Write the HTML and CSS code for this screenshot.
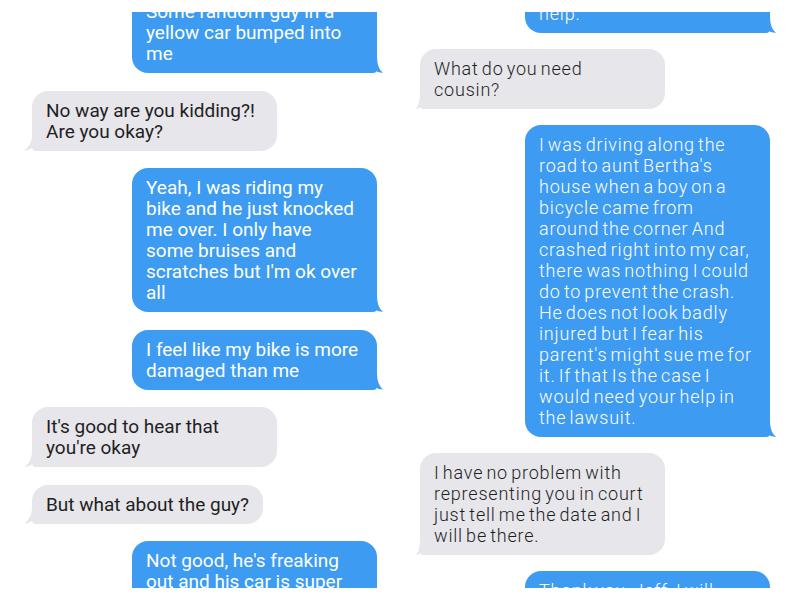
FILE: index.html
```html
<!DOCTYPE html>
<html lang="en">
<head>
    <meta charset="UTF-8">
    <meta name="viewport" content="width=device-width, initial-scale=1.0">
    <title>Conversation</title>
    <link rel="stylesheet" href="styles.css">
</head>
<body>
    <div class="screens">
        <div class="thread thread-left">
            <div class="bubble out full first">Some random guy in a<br>yellow car bumped into<br>me</div>
            <div class="bubble in full">No way are you kidding?!<br>Are you okay?</div>
            <div class="bubble out full">Yeah, I was riding my<br>bike and he just knocked<br>me over. I only have<br>some bruises and<br>scratches but I'm ok over<br>all</div>
            <div class="bubble out full">I feel like my bike is more<br>damaged than me</div>
            <div class="bubble in full">It's good to hear that<br>you're okay</div>
            <div class="bubble in">But what about the guy?</div>
            <div class="bubble out full">Not good, he's freaking<br>out and his car is super<br>damaged</div>
        </div>

        <div class="thread thread-right">
            <div class="bubble out full first">I need your legal<br>help.</div>
            <div class="bubble in full">What do you need<br>cousin?</div>
            <div class="bubble out full">I was driving along the<br>road to aunt Bertha's<br>house when a boy on a<br>bicycle came from<br>around the corner And<br>crashed right into my car,<br>there was nothing I could<br>do to prevent the crash.<br>He does not look badly<br>injured but I fear his<br>parent's might sue me for<br>it. If that Is the case I<br>would need your help in<br>the lawsuit.</div>
            <div class="bubble in full">I have no problem with<br>representing you in court<br>just tell me the date and I<br>will be there.</div>
            <div class="bubble out full">Thank you, Jeff. I will<br>let you know</div>
        </div>
    </div>
</body>
</html>
```

FILE: styles.css
```css
* {
    margin: 0;
    padding: 0;
    box-sizing: border-box;
}

body {
    background: #fff;
    font-family: Roboto, "Liberation Sans", Arial, sans-serif;
}

.screens {
    display: grid;
    grid-template-columns: 400px 400px;
    padding-top: 12px;
}

.thread {
    height: 576px;
    overflow: hidden;
    display: flex;
    flex-direction: column;
    gap: 17.5px;
}

.thread-left {
    padding: 0 23px 0 32px;
}

.thread-left .first {
    margin-top: -20px;
}

.thread-right {
    padding: 0 30px 0 20px;
    gap: 16px;
    font-weight: 300;
    letter-spacing: 0.8px;
    word-spacing: -2px;
}

.thread-right .first {
    margin-top: -39px;
}

.bubble {
    position: relative;
    flex-shrink: 0;
    max-width: 245px;
    padding: 9px 14px;
    border-radius: 16px;
    font-size: 19px;
    line-height: 21px;
    white-space: nowrap;
}

.thread-right .bubble {
    font-size: 18px;
}

.bubble.full {
    width: 245px;
}

.thread-right .bubble.full {
    width: 247px;
}

.out {
    align-self: flex-end;
    background: #3d9bf1;
    color: #fff;
    border-bottom-right-radius: 4px;
}

.in {
    align-self: flex-start;
    background: #e6e6eb;
    color: #1f1f1f;
    border-bottom-left-radius: 4px;
}

/* petite queue de la bulle */
.bubble::after {
    content: "";
    position: absolute;
    bottom: 0;
    width: 16px;
    height: 16px;
}

.out::after {
    right: -6px;
    background: #3d9bf1;
    clip-path: path("M0 0 L10 0 Q10 11 16 16 Q11 16 7 13 Q4 16 0 16 Z");
}

.in::after {
    left: -8px;
    background: #e6e6eb;
    clip-path: path("M16 0 L8 0 Q8 11 0 16 Q5 16 9 13 Q12 16 16 16 Z");
}

.thread-right .in::after {
    left: -4px;
    width: 12px;
    clip-path: path("M12 0 L4 0 Q4 11 0 16 Q3 16 6 13 Q9 16 12 16 Z");
}
```
